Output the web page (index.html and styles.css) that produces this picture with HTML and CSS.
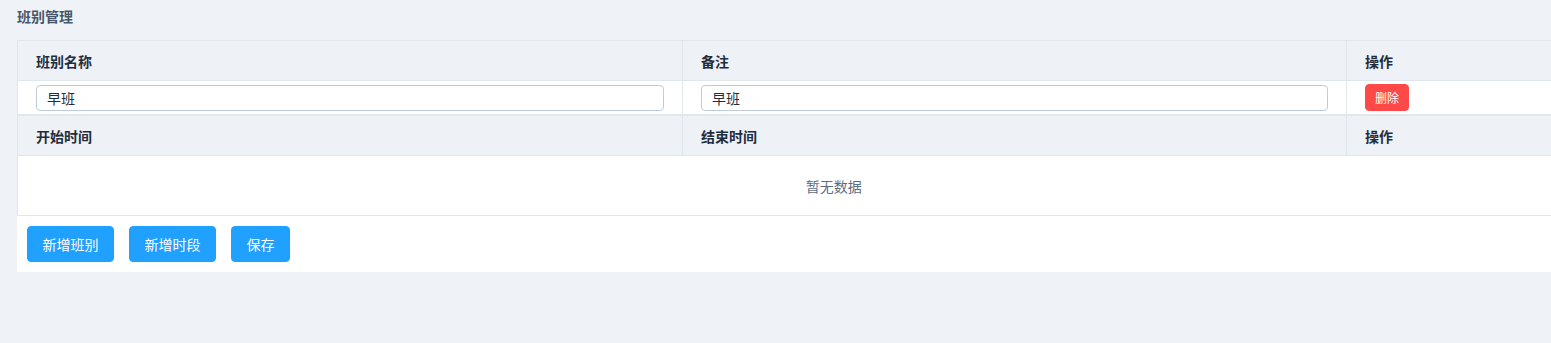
FILE: index.html
```html
<!DOCTYPE html>
<html lang="zh-CN">
<head>
  <meta charset="UTF-8" />
  <title>班别管理</title>
  <link rel="stylesheet" href="styles.css">
</head>
<body>
  <div class="main">
    <h2 class="page-title">班别管理</h2>

    <div class="panel">
      <!-- 班别表 -->
      <table class="grid grid-shifts">
        <colgroup>
          <col class="col-a"><col class="col-b"><col class="col-c">
        </colgroup>
        <thead>
          <tr>
            <th>班别名称</th>
            <th>备注</th>
            <th>操作</th>
          </tr>
        </thead>
        <tbody>
          <tr>
            <td><input class="field" type="text" value="早班"></td>
            <td><input class="field" type="text" value="早班"></td>
            <td><button class="btn-danger">删除</button></td>
          </tr>
        </tbody>
      </table>

      <!-- 时段表 -->
      <table class="grid grid-times">
        <colgroup>
          <col class="col-a"><col class="col-b"><col class="col-c">
        </colgroup>
        <thead>
          <tr>
            <th>开始时间</th>
            <th>结束时间</th>
            <th>操作</th>
          </tr>
        </thead>
        <tbody>
          <tr>
            <td class="empty" colspan="3">暂无数据</td>
          </tr>
        </tbody>
      </table>

      <div class="actions">
        <button class="btn-primary">新增班别</button>
        <button class="btn-primary">新增时段</button>
        <button class="btn-primary">保存</button>
      </div>
    </div>
  </div>
</body>
</html>
```

FILE: styles.css
```css
body {
  margin: 0;
  background: #eff2f7;
  font-family: "Noto Sans CJK SC", "Noto Sans", sans-serif;
  color: #1f2d3d;
  min-height: 100vh;
}

.main {
  padding: 0 17px;
  overflow: hidden;
}

.page-title {
  margin: 0;
  height: 40px;
  line-height: 32px;
  font-size: 14px;
  font-weight: bold;
  color: #48576a;
}

.panel {
  width: 1632px;
  background: #fff;
  padding-bottom: 10px;
}

/* 表格 */
.grid {
  width: 100%;
  border-collapse: collapse;
  table-layout: fixed;
  font-size: 14px;
}
.col-a { width: 665px; }
.col-b { width: 664px; }
.col-c { width: 303px; }

.grid th {
  height: 39px;
  padding: 0 18px;
  text-align: left;
  font-weight: bold;
  background: #eef1f6;
  border: 1px solid #dfe6ec;
}
.grid td {
  padding: 0 18px;
  border: 1px solid #dfe6ec;
  border-top: none;
}
.grid-shifts td {
  height: 33px;
  border-bottom: 2px solid #dfe6ec;
}
.grid-times th {
  height: 39px;
  border-top: none;
}
.grid td.empty {
  height: 59px;
  text-align: center;
  color: #5e6d82;
  border-right: none;
}

.field {
  display: block;
  box-sizing: border-box;
  width: 100%;
  height: 26px;
  padding: 0 10px;
  border: 1px solid #bfcbd9;
  border-radius: 4px;
  font-family: inherit;
  font-size: 14px;
  color: #1f2d3d;
  outline: none;
}

.btn-danger {
  display: block;
  height: 27px;
  padding: 0 9px;
  border: 1px solid #ff4949;
  border-radius: 4px;
  background: #ff4949;
  color: #fff;
  font-family: inherit;
  font-size: 12px;
}

/* 底部按钮 */
.actions {
  display: flex;
  gap: 15px;
  padding: 10px 10px 0;
}
.btn-primary {
  height: 36px;
  padding: 0 14.5px;
  border: 1px solid #20a0ff;
  border-radius: 4px;
  background: #20a0ff;
  color: #fff;
  font-family: inherit;
  font-size: 14px;
  cursor: pointer;
}
```
